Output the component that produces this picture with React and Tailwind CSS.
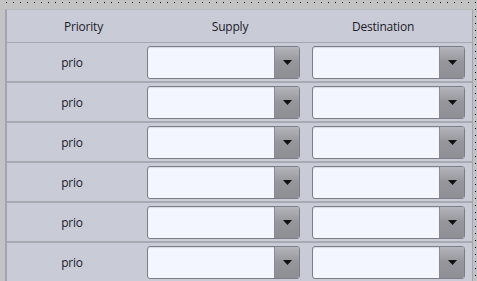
import React from 'react';

const rows = [1, 2, 3, 4, 5, 6];

function Combo() {
  return (
    <div className="flex h-[33px] w-[153px] overflow-hidden rounded-[3px] border border-[#7d7f88] bg-[#f3f5ff] shadow-[inset_0_1px_1px_rgba(0,0,0,0.12)]">
      <div className="flex-1" />
      <div className="flex w-[25px] items-center justify-center border-l border-[#8a8b92] bg-gradient-to-b from-[#b4b4ba] via-[#95959c] to-[#8e8e95]">
        <svg width="9" height="5" viewBox="0 0 9 5">
          <path d="M0 0h9L4.5 5z" fill="#111" />
        </svg>
      </div>
    </div>
  );
}

function App() {
  return (
    <div
      className="h-[281px] w-[477px] overflow-hidden bg-[#c3c3c3] bg-[radial-gradient(circle,#000_0_0.9px,transparent_0.9px)] bg-[length:7px_7px] bg-[position:3px_-1px] pl-[5px] pt-[9px]"
      style={{ fontFamily: '"Open Sans", "Noto Sans", sans-serif' }}
    >
      <div className="h-[300px] w-[468px] border-l-2 border-t border-r border-[#a3a5ad] border-t-[#b9bbc3] bg-[#c9ccd6] text-[12px] text-[#1b1b2a]">
        <div className="flex h-[33px] items-center border-b border-[#a6a8b0] pt-[1px]">
          <div className="w-[153px] text-center tracking-[-0.2px]">Priority</div>
          <div className="w-[140px] text-center tracking-[-0.2px]">Supply</div>
          <div className="w-[166px] text-center tracking-[-0.2px]">Destination</div>
        </div>
        {rows.map(r => (
          <div key={r} className="flex h-[40px] items-start border-b-2 border-[#a8aab2] pt-[3px]">
            <div className="flex h-[33px] w-[130px] items-center justify-center tracking-[-0.2px]">prio</div>
            <div className="ml-[10px]">
              <Combo />
            </div>
            <div className="ml-[12px]">
              <Combo />
            </div>
          </div>
        ))}
      </div>
    </div>
  );
}

export default App;
